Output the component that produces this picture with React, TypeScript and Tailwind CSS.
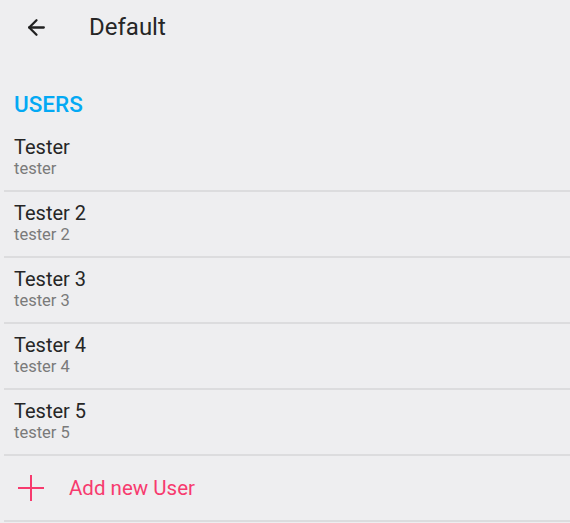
import { ArrowLeft } from 'lucide-react'

const users = [
  { name: 'Tester', login: 'tester' },
  { name: 'Tester 2', login: 'tester 2' },
  { name: 'Tester 3', login: 'tester 3' },
  { name: 'Tester 4', login: 'tester 4' },
  { name: 'Tester 5', login: 'tester 5' },
]

export default function App() {
  return (
    <div
      className="w-[570px] h-[523px] overflow-hidden bg-[#eeeef0]"
      style={{ fontFamily: 'Roboto, "Noto Sans", sans-serif' }}
    >
      <header className="flex items-center h-[54px]">
        <div className="w-[89px] flex items-center pl-[24px]">
          <ArrowLeft className="w-[25px] h-[25px] text-[#212121]" strokeWidth={2.2} />
        </div>
        <h1 className="text-[24px] leading-[28px] text-[#262626]">Default</h1>
      </header>

      <div className="mt-[30px] h-[42px] flex items-center pl-[14px] text-[22.5px] font-medium text-[#03a9f4]">
        USERS
      </div>

      <ul>
        {users.map((u) => (
          <li key={u.name} className="ml-[4px] h-[66px] border-b-2 border-[#dcdcde] pl-[10px] pt-[9px]">
            <div className="text-[20px] leading-[24px] text-[#262626]">{u.name}</div>
            <div className="text-[16.5px] leading-[20px] text-[#7a7a7a]">{u.login}</div>
          </li>
        ))}
        <li className="ml-[4px] h-[66px] border-b-2 border-[#dcdcde] flex items-center">
          <div className="w-[65px] flex items-center pl-[14px]">
            <svg width="26" height="26" viewBox="0 0 26 26" className="text-[#f73a6e]">
              <path d="M13 0v26M0 13h26" stroke="currentColor" strokeWidth="2" fill="none" />
            </svg>
          </div>
          <span className="text-[20.5px] leading-[24px] text-[#f73a6e]">Add new User</span>
        </li>
      </ul>
    </div>
  )
}
